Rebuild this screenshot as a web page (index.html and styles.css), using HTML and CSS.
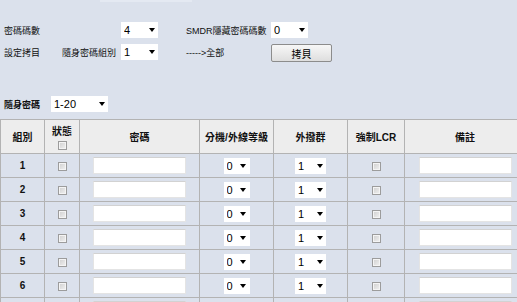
FILE: index.html
```html
<!DOCTYPE html>
<html>
<head>
<meta charset="utf-8">
<link rel="stylesheet" href="styles.css">
</head>
<body>
<div class="tabline"></div>
<div class="form">
  <span class="lbl span2">密碼碼數</span>
  <span class="sel w37"><select><option>4</option></select></span>
  <span class="lbl">SMDR隱藏密碼碼數</span>
  <span class="sel w37"><select><option>0</option></select></span>

  <span class="lbl">設定拷目</span>
  <span class="lbl">隨身密碼組別</span>
  <span class="sel w37"><select><option>1</option></select></span>
  <span class="lbl">-----&gt;全部</span>
  <button class="btn">拷貝</button>
</div>

<div class="group">
  <span class="glbl">隨身密碼</span>
  <span class="sel w57"><select><option>1-20</option></select></span>
</div>

<table class="grid">
  <thead>
    <tr>
      <th class="c1">組別</th>
      <th class="c2"><div class="st">狀態</div><input type="checkbox" class="cb"></th>
      <th class="c3">密碼</th>
      <th class="c4">分機/外線等級</th>
      <th class="c5">外撥群</th>
      <th class="c6">強制LCR</th>
      <th class="c7">備註</th>
    </tr>
  </thead>
  <tbody>
    <tr><td class="num">1</td><td><input type="checkbox" class="cb"></td><td><input class="txt" type="text"></td><td><span class="sel w26"><select><option>0</option></select></span></td><td><span class="sel w31"><select><option>1</option></select></span></td><td><input type="checkbox" class="cb"></td><td><input class="txt" type="text"></td></tr>
    <tr><td class="num">2</td><td><input type="checkbox" class="cb"></td><td><input class="txt" type="text"></td><td><span class="sel w26"><select><option>0</option></select></span></td><td><span class="sel w31"><select><option>1</option></select></span></td><td><input type="checkbox" class="cb"></td><td><input class="txt" type="text"></td></tr>
    <tr><td class="num">3</td><td><input type="checkbox" class="cb"></td><td><input class="txt" type="text"></td><td><span class="sel w26"><select><option>0</option></select></span></td><td><span class="sel w31"><select><option>1</option></select></span></td><td><input type="checkbox" class="cb"></td><td><input class="txt" type="text"></td></tr>
    <tr><td class="num">4</td><td><input type="checkbox" class="cb"></td><td><input class="txt" type="text"></td><td><span class="sel w26"><select><option>0</option></select></span></td><td><span class="sel w31"><select><option>1</option></select></span></td><td><input type="checkbox" class="cb"></td><td><input class="txt" type="text"></td></tr>
    <tr><td class="num">5</td><td><input type="checkbox" class="cb"></td><td><input class="txt" type="text"></td><td><span class="sel w26"><select><option>0</option></select></span></td><td><span class="sel w31"><select><option>1</option></select></span></td><td><input type="checkbox" class="cb"></td><td><input class="txt" type="text"></td></tr>
    <tr><td class="num">6</td><td><input type="checkbox" class="cb"></td><td><input class="txt" type="text"></td><td><span class="sel w26"><select><option>0</option></select></span></td><td><span class="sel w31"><select><option>1</option></select></span></td><td><input type="checkbox" class="cb"></td><td><input class="txt" type="text"></td></tr>
    <tr><td class="num"></td><td><input type="checkbox" class="cb"></td><td><input class="txt" type="text"></td><td><span class="sel w26 blank"></span></td><td><span class="sel w31 blank"></span></td><td><input type="checkbox" class="cb"></td><td><input class="txt" type="text"></td></tr>
  </tbody>
</table>
</body>
</html>
```

FILE: styles.css
```css
html {
  overflow: hidden;
  background: #dbe1ec;
}
body {
  margin: 0;
  font-family: "Liberation Sans", "Noto Sans CJK TC", sans-serif;
  font-size: 9px;
  color: #111;
}
.tabline {
  margin-left: 100px;
  width: 92px;
  height: 2px;
  background: #e4e9f2;
}
.form {
  display: grid;
  grid-template-columns: 58px 59px 65px 85px auto;
  grid-auto-rows: 16px;
  row-gap: 6px;
  align-items: center;
  padding: 20px 0 0 4px;
}
.span2 { grid-column: span 2; }
.lbl { white-space: nowrap; }
.sel {
  position: relative;
  display: inline-block;
  height: 16px;
  vertical-align: middle;
}
.sel::after {
  content: "";
  position: absolute;
  right: 3px;
  top: 6px;
  border-left: 3px solid transparent;
  border-right: 3px solid transparent;
  border-top: 4px solid #000;
  pointer-events: none;
}
.sel.blank { background: #fff; }
.sel select {
  appearance: none;
  -webkit-appearance: none;
  display: block;
  width: 100%;
  height: 16px;
  border: none;
  border-radius: 0;
  background: #fff;
  font-family: "Liberation Sans", sans-serif;
  font-size: 11px;
  color: #000;
  padding: 0 0 0 3px;
  margin: 0;
  outline: none;
}
.w37 { width: 37px; }
.w57 { width: 57px; }
.w26 { width: 26px; }
.w31 { width: 31px; }
.w26::after { right: 4px; }
.btn {
  width: 61px;
  height: 18px;
  justify-self: start;
  align-self: start;
  margin: 0;
  padding: 0;
  border: 1px solid #8c8c8c;
  border-radius: 2px;
  background: linear-gradient(#f7f7f7, #dedede);
  font: inherit;
  font-size: 10px;
  color: #000;
}
.group {
  display: flex;
  align-items: center;
  margin-top: 36px;
  padding-left: 4px;
}
.glbl {
  width: 47px;
  font-weight: bold;
}
.grid {
  margin-top: 7px;
  width: 526px;
  table-layout: fixed;
  border-collapse: collapse;
}
.grid th, .grid td {
  border: 1px solid #b3b3b3;
  padding: 0;
  text-align: center;
  vertical-align: middle;
}
.grid th {
  background: #ededed;
  height: 33px;
  font-size: 10px;
  font-weight: bold;
}
.grid td {
  height: 23px;
}
.c1 { width: 43px; }
.c2 { width: 34px; }
.c3 { width: 119px; }
.c4 { width: 73px; }
.c5 { width: 73px; }
.c6 { width: 56px; }
.c7 { width: 120px; }
.st { margin-bottom: 2px; }
.num {
  font-size: 10px;
  font-weight: bold;
}
.cb {
  appearance: none;
  -webkit-appearance: none;
  display: inline-block;
  width: 9px;
  height: 9px;
  margin: 0;
  border: 1px solid #9c9c9c;
  background: linear-gradient(135deg, #cfcfcf, #f2f2f2);
  box-shadow: inset 0 0 0 1px #f4f4f4;
  vertical-align: middle;
}
.txt {
  box-sizing: border-box;
  width: 93px;
  height: 17px;
  margin: 0;
  padding: 0;
  border: 1px solid #e4e4e4;
  border-top-color: #d2d2d2;
  background: #fff;
  vertical-align: middle;
}
```
